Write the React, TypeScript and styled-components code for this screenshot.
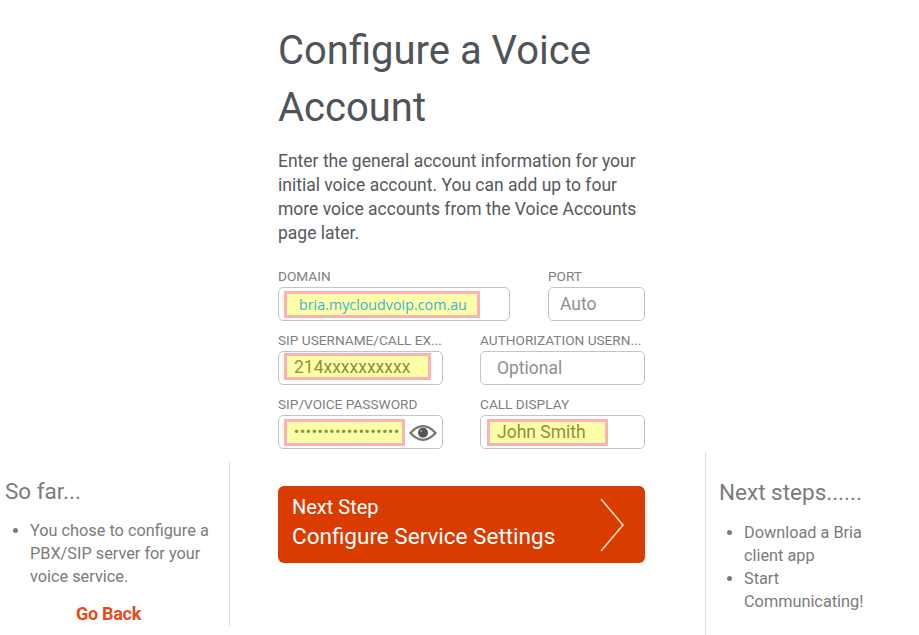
import React, { FC } from "react";
import styled, { createGlobalStyle } from "styled-components";

const GlobalStyle = createGlobalStyle`
  html, body {
    margin: 0;
    padding: 0;
    background: #fff;
    overflow: hidden;
  }
`;

const Page = styled.div`
  width: 919px;
  height: 635px;
  overflow: hidden;
  display: flex;
  align-items: flex-start;
  font-family: Roboto, "Liberation Sans", sans-serif;
  color: #55595c;
`;

const LeftPanel = styled.aside`
  box-sizing: border-box;
  width: 230px;
  height: 164px;
  margin-top: 462px;
  padding: 14px 0 0 5px;
  border-right: 1px solid #dcdcd2;
  color: #7b7b7b;
`;

const RightPanel = styled.aside`
  box-sizing: border-box;
  width: 214px;
  height: 183px;
  margin: 452px 0 0 60px;
  padding: 25px 0 0 13px;
  border-left: 1px solid #dcdcd2;
  color: #7b7b7b;
`;

const PanelTitle = styled.h3`
  margin: 0;
  font-size: 22.5px;
  line-height: 30px;
  font-weight: 400;
`;

const PanelList = styled.ul`
  width: 150px;
  margin: 14px 0 0;
  padding: 0 0 0 25px;
  font-size: 16.3px;
  line-height: 23px;
`;

const LeftList = styled(PanelList)`
  width: 185px;
  margin-top: 13px;
`;

const GoBack = styled.a`
  display: block;
  margin-top: 14px;
  padding-left: 1px;
  text-align: center;
  width: 205px;
  font-size: 18px;
  line-height: 24px;
  font-weight: 700;
  letter-spacing: -0.3px;
  color: #de4f1c;
`;

const Main = styled.main`
  width: 367px;
  margin-left: 48px;
  padding-top: 22px;
`;

const Title = styled.h1`
  margin: 0;
  font-size: 40px;
  line-height: 57px;
  font-weight: 400;
  color: #4f5459;
`;

const Intro = styled.p`
  margin: 13px 0 0;
  font-size: 17.5px;
  line-height: 24px;
  color: #55595c;
`;

const Row = styled.div<{ $top: number }>`
  display: flex;
  justify-content: space-between;
  margin-top: ${(p) => p.$top}px;
`;

const Field = styled.div<{ $width: number }>`
  width: ${(p) => p.$width}px;
`;

const Label = styled.div`
  font-size: 13.65px;
  line-height: 16px;
  height: 16px;
  white-space: nowrap;
  color: #808080;
`;

const InputBox = styled.div<{ $inset?: number; $top?: number }>`
  box-sizing: border-box;
  height: 34px;
  margin-top: 3px;
  padding: ${(p) => p.$top ?? 3}px 0 0 ${(p) => p.$inset ?? 5}px;
  display: flex;
  align-items: flex-start;
  border: 1px solid #c4c4c4;
  border-radius: 5px;
  background: #fff;
`;

const Highlight = styled.div<{ $width: number; $pad: number; $drop?: number }>`
  box-sizing: border-box;
  width: ${(p) => p.$width}px;
  height: 27px;
  padding-left: ${(p) => p.$pad}px;
  padding-top: ${(p) => p.$drop ?? 0}px;
  border: 3px solid #ffb0b0;
  background: #ffffaa;
  font-size: 17.5px;
  line-height: 21px;
  white-space: nowrap;
  overflow: hidden;
  color: #8f8f3a;
`;

const DomainText = styled.span`
  font-family: "Open Sans", sans-serif;
  font-size: 14.3px;
  color: #3cb4d2;
`;

const Placeholder = styled.span<{ $pad: number }>`
  padding-left: ${(p) => p.$pad}px;
  font-size: 17.5px;
  line-height: 27px;
  color: #8f8f8f;
`;

const Dots = styled.span`
  display: block;
  font-size: 14px;
  line-height: 21px;
  font-weight: 700;
  letter-spacing: 0.85px;
`;

const EyeIcon = styled.svg`
  flex: none;
  width: 28px;
  height: 16px;
  margin: 6px 0 0 4px;
`;

const NextButton = styled.a`
  box-sizing: border-box;
  display: flex;
  align-items: center;
  justify-content: space-between;
  height: 77px;
  margin-top: 37px;
  padding: 0 21px 0 14px;
  border-radius: 6px;
  background: #da3c00;
  color: #fff;
`;

const ButtonText = styled.div`
  padding-bottom: 6px;
`;

const ButtonLabel = styled.div`
  font-size: 20px;
  line-height: 29px;
`;

const ButtonAction = styled.div`
  font-size: 22.5px;
  line-height: 29px;
`;

const Chevron = styled.svg`
  flex: none;
  width: 24px;
  height: 54px;
`;

const Eye: FC = () => (
  <EyeIcon viewBox="0 0 28 16">
    <path d="M1.5 8 C6 3 10 1.2 14 1.2 C18 1.2 22 3 26.5 8 C22 13 18 14.8 14 14.8 C10 14.8 6 13 1.5 8 Z" fill="none" stroke="#757575" strokeWidth="2.2" />
    <circle cx="14" cy="7.8" r="5" fill="#555" />
    <circle cx="12.2" cy="6" r="1" fill="#aaa" />
  </EyeIcon>
);

const App: FC = () => (
  <>
    <GlobalStyle />
    <Page>
      <LeftPanel>
        <PanelTitle>So far...</PanelTitle>
        <LeftList>
          <li>You chose to configure a PBX/SIP server for your voice service.</li>
        </LeftList>
        <GoBack>Go Back</GoBack>
      </LeftPanel>
      <Main>
        <Title>Configure a Voice Account</Title>
        <Intro>
          Enter the general account information for your initial voice account. You can add up to four more voice
          accounts from the Voice Accounts page later.
        </Intro>
        <Row $top={23}>
          <Field $width={232}>
            <Label>DOMAIN</Label>
            <InputBox>
              <Highlight $width={196} $pad={12}>
                <DomainText>bria.mycloudvoip.com.au</DomainText>
              </Highlight>
            </InputBox>
          </Field>
          <Field $width={97}>
            <Label>PORT</Label>
            <InputBox>
              <Placeholder $pad={6}>Auto</Placeholder>
            </InputBox>
          </Field>
        </Row>
        <Row $top={11}>
          <Field $width={165}>
            <Label>SIP USERNAME/CALL EX...</Label>
            <InputBox $top={1}>
              <Highlight $width={147} $pad={7} $drop={1}>214xxxxxxxxxx</Highlight>
            </InputBox>
          </Field>
          <Field $width={165}>
            <Label>AUTHORIZATION USERN...</Label>
            <InputBox>
              <Placeholder $pad={11}>Optional</Placeholder>
            </InputBox>
          </Field>
        </Row>
        <Row $top={11}>
          <Field $width={165}>
            <Label>SIP/VOICE PASSWORD</Label>
            <InputBox>
              <Highlight $width={121} $pad={7}>
                <Dots>••••••••••••••••••</Dots>
              </Highlight>
              <Eye />
            </InputBox>
          </Field>
          <Field $width={165}>
            <Label>CALL DISPLAY</Label>
            <InputBox $inset={6}>
              <Highlight $width={121} $pad={7}>John Smith</Highlight>
            </InputBox>
          </Field>
        </Row>
        <NextButton>
          <ButtonText>
            <ButtonLabel>Next Step</ButtonLabel>
            <ButtonAction>Configure Service Settings</ButtonAction>
          </ButtonText>
          <Chevron viewBox="0 0 24 54">
            <path d="M1 1 L23 27 L1 53" fill="none" stroke="#f6dcd0" strokeWidth="1.6" />
          </Chevron>
        </NextButton>
      </Main>
      <RightPanel>
        <PanelTitle>Next steps......</PanelTitle>
        <PanelList>
          <li>Download a Bria client app</li>
          <li>Start Communicating!</li>
        </PanelList>
      </RightPanel>
    </Page>
  </>
);

export default App;
